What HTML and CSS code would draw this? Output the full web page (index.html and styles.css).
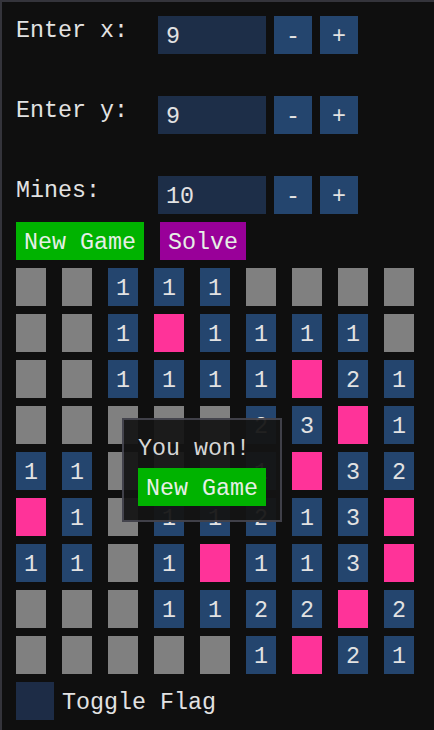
FILE: index.html
```html
<!DOCTYPE html>
<html>
<head>
<meta charset="utf-8">
<link rel="stylesheet" href="styles.css">
</head>
<body>
<div class="window">
  <div class="field-row">
    <span class="label">Enter x:</span>
    <div class="input">9</div>
    <button class="step">-</button>
    <button class="step">+</button>
  </div>
  <div class="field-row">
    <span class="label">Enter y:</span>
    <div class="input">9</div>
    <button class="step">-</button>
    <button class="step">+</button>
  </div>
  <div class="field-row last">
    <span class="label">Mines:</span>
    <div class="input">10</div>
    <button class="step">-</button>
    <button class="step">+</button>
  </div>
  <div class="actions">
    <button class="btn green">New Game</button>
    <button class="btn purple">Solve</button>
  </div>
  <div class="grid">
    <div class="cell e"></div><div class="cell e"></div><div class="cell n">1</div><div class="cell n">1</div><div class="cell n">1</div><div class="cell e"></div><div class="cell e"></div><div class="cell e"></div><div class="cell e"></div>
    <div class="cell e"></div><div class="cell e"></div><div class="cell n">1</div><div class="cell m"></div><div class="cell n">1</div><div class="cell n">1</div><div class="cell n">1</div><div class="cell n">1</div><div class="cell e"></div>
    <div class="cell e"></div><div class="cell e"></div><div class="cell n">1</div><div class="cell n">1</div><div class="cell n">1</div><div class="cell n">1</div><div class="cell m"></div><div class="cell n">2</div><div class="cell n">1</div>
    <div class="cell e"></div><div class="cell e"></div><div class="cell e"></div><div class="cell e"></div><div class="cell e"></div><div class="cell n">2</div><div class="cell n">3</div><div class="cell m"></div><div class="cell n">1</div>
    <div class="cell n">1</div><div class="cell n">1</div><div class="cell e"></div><div class="cell e"></div><div class="cell e"></div><div class="cell n">1</div><div class="cell m"></div><div class="cell n">3</div><div class="cell n">2</div>
    <div class="cell m"></div><div class="cell n">1</div><div class="cell e"></div><div class="cell n">1</div><div class="cell n">1</div><div class="cell n">2</div><div class="cell n">1</div><div class="cell n">3</div><div class="cell m"></div>
    <div class="cell n">1</div><div class="cell n">1</div><div class="cell e"></div><div class="cell n">1</div><div class="cell m"></div><div class="cell n">1</div><div class="cell n">1</div><div class="cell n">3</div><div class="cell m"></div>
    <div class="cell e"></div><div class="cell e"></div><div class="cell e"></div><div class="cell n">1</div><div class="cell n">1</div><div class="cell n">2</div><div class="cell n">2</div><div class="cell m"></div><div class="cell n">2</div>
    <div class="cell e"></div><div class="cell e"></div><div class="cell e"></div><div class="cell e"></div><div class="cell e"></div><div class="cell n">1</div><div class="cell m"></div><div class="cell n">2</div><div class="cell n">1</div>
  </div>
  <div class="check">
    <span class="box"></span>
    <span class="check-label">Toggle Flag</span>
  </div>
  <div class="popup">
    <div class="popup-title">You won!</div>
    <button class="btn green">New Game</button>
  </div>
</div>
</body>
</html>
```

FILE: styles.css
```css
html, body {
  margin: 0;
  padding: 0;
  background: #0f0f0f;
  overflow: hidden;
}

body {
  font-family: "Liberation Mono", "DejaVu Sans Mono", monospace;
  font-size: 23.33px;
  color: #e2e2e2;
}

.window {
  position: relative;
  box-sizing: border-box;
  width: 100vw;
  height: 100vh;
  border-top: 2px solid #34343b;
  border-left: 2px solid #34343b;
  padding: 14px 0 0 14px;
}

.field-row {
  display: flex;
  align-items: flex-start;
  gap: 8px;
  height: 38px;
  margin-bottom: 42px;
}

.field-row.last {
  margin-bottom: 8px;
}

.label {
  width: 134px;
  line-height: 30px;
  white-space: pre;
}

.input {
  box-sizing: border-box;
  width: 108px;
  height: 38px;
  padding: 4px 8px 0;
  line-height: 34px;
  background: #1d2e48;
}

button {
  font: inherit;
  color: inherit;
  border: 0;
  margin: 0;
  cursor: default;
}

.step {
  box-sizing: border-box;
  width: 38px;
  height: 38px;
  padding: 4px 0 0;
  line-height: 34px;
  background: #24456e;
  text-align: center;
}

.actions {
  display: flex;
  gap: 16px;
}

.btn {
  box-sizing: border-box;
  height: 38px;
  padding: 4px 8px 0;
  line-height: 34px;
  white-space: pre;
  color: #e6efe6;
}

.green {
  background: #00b300;
}

.purple {
  background: #990099;
}

.grid {
  display: grid;
  grid-template-columns: repeat(9, 30px);
  grid-auto-rows: 38px;
  column-gap: 16px;
  row-gap: 8px;
  margin-top: 8px;
}

.cell {
  box-sizing: border-box;
  padding-top: 4px;
  line-height: 34px;
  text-align: center;
}

.cell.e {
  background: #808080;
}

.cell.n {
  background: #24456e;
}

.cell.m {
  background: #ff3399;
}

.check {
  display: flex;
  gap: 8px;
  margin-top: 8px;
}

.box {
  width: 38px;
  height: 38px;
  background: #1d2c46;
}

.check-label {
  box-sizing: border-box;
  height: 38px;
  padding-top: 4px;
  line-height: 34px;
  white-space: pre;
}

.popup {
  position: absolute;
  left: 120px;
  top: 416px;
  box-sizing: border-box;
  width: 160px;
  padding: 14px;
  border: 2px solid rgba(110, 110, 128, 0.5);
  background: rgba(20, 20, 20, 0.94);
}

.popup-title {
  line-height: 30px;
  margin-bottom: 4px;
  white-space: pre;
  color: #d6d6d6;
}
```
